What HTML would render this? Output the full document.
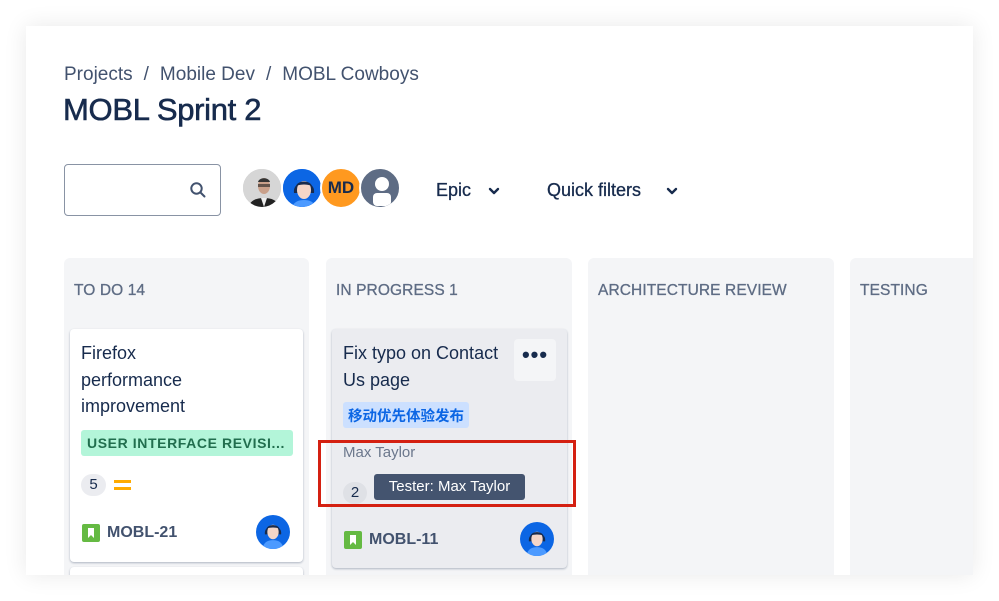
<!DOCTYPE html>
<html><head><meta charset="utf-8"><style>
*{box-sizing:border-box;margin:0;padding:0}
body{width:999px;height:601px;background:#fff;font-family:"Liberation Sans","Noto Sans CJK SC",sans-serif;position:relative;overflow:hidden;color:#172b4d}
.panel{position:absolute;left:26px;top:26px;width:947px;height:549px;background:#fff;box-shadow:0 0 22px rgba(0,0,0,.09);overflow:hidden}
.abs{position:absolute}
.crumb{left:38px;top:38px;font-size:19px;color:#42526e;white-space:nowrap}
.crumb span{margin:0 11px;}
h1{position:absolute;left:37px;top:66px;font-size:31px;font-weight:normal;color:#172b4d;letter-spacing:-.3px;-webkit-text-stroke:.6px #172b4d}
.search{left:38px;top:138px;width:157px;height:52px;border:1.5px solid #8993a4;border-radius:4px}
.av{position:absolute;width:42px;height:42px;border-radius:50%;border:2px solid #fff;overflow:hidden}
.filter{font-size:18px;color:#172b4d;-webkit-text-stroke:.3px #172b4d}
.col{position:absolute;top:232px;height:330px;background:#f4f5f7;border-radius:6px}
.colh{position:absolute;left:10px;top:24px;font-size:15.5px;color:#5e6c84;letter-spacing:.1px;-webkit-text-stroke:.3px #5e6c84}
.card{position:absolute;border-radius:4px;box-shadow:0 1px 2px rgba(9,30,66,.3)}
.t{font-size:18px;line-height:26.5px;color:#172b4d}
.key{font-size:16px;font-weight:bold;color:#42526e}
.bm{position:absolute;width:18px;height:18px;background:#65ba43;border-radius:2px}
</style></head><body>
<div class="panel">
<div class="abs crumb">Projects<span>/</span>Mobile Dev<span>/</span>MOBL Cowboys</div>
<h1>MOBL Sprint 2</h1>
<div class="abs search"><svg style="position:absolute;left:124px;top:16px" width="18" height="18" viewBox="0 0 18 18"><circle cx="7.5" cy="7.5" r="5.2" fill="none" stroke="#42526e" stroke-width="2"/><path d="M11.5 11.5l4 4" stroke="#42526e" stroke-width="2" stroke-linecap="round"/></svg></div>
<div class="av" style="left:215px;top:141px;background:#ccc"><svg width="42" height="42" viewBox="0 0 42 42"><rect width="42" height="42" fill="#d6d6d6"/><path d="M4 42c2-10 8-13 17-13s15 3 17 13z" fill="#222"/><path d="M18 29l3 9 3-9z" fill="#eee"/><ellipse cx="21" cy="17" rx="6" ry="8" fill="#c9a08a"/><path d="M15 13c1-5 11-5 12 0" fill="#333"/><rect x="15" y="15" width="12" height="3" fill="#222" opacity=".6"/></svg></div>
<div class="av" style="left:255px;top:141px;background:#0065ff"><svg width="42" height="42" viewBox="0 0 42 42"><rect width="42" height="42" fill="#0c66e4"/><path d="M8 42c1-8 6-11 13-11s12 3 13 11z" fill="#4c9aff"/><path d="M11 24c-2-14 22-14 20 0z" fill="#172b4d"/><ellipse cx="21" cy="21" rx="7" ry="9" fill="#f4d6c8"/><path d="M13 17c2-6 14-6 16 0c-5-2-11-2-16 0z" fill="#172b4d"/></svg></div>
<div class="av" style="left:294px;top:141px;background:#ff991f;font-size:17px;font-weight:bold;color:#172b4d;text-align:center;line-height:38px">MD</div>
<div class="av" style="left:333px;top:141px;background:#5e6c84"><svg width="42" height="42" viewBox="0 0 42 42"><circle cx="21" cy="15" r="7" fill="#fff"/><rect x="12" y="24" width="18" height="13" rx="4" fill="#fff"/></svg></div>
<div class="abs filter" style="left:410px;top:154px">Epic</div>
<svg class="abs" style="left:462px;top:160px" width="12" height="10" viewBox="0 0 12 10"><path d="M2 3l4 4 4-4" fill="none" stroke="#172b4d" stroke-width="2.4" stroke-linecap="round" stroke-linejoin="round"/></svg>
<div class="abs filter" style="left:521px;top:154px">Quick filters</div>
<svg class="abs" style="left:640px;top:160px" width="12" height="10" viewBox="0 0 12 10"><path d="M2 3l4 4 4-4" fill="none" stroke="#172b4d" stroke-width="2.4" stroke-linecap="round" stroke-linejoin="round"/></svg>

<div class="col" style="left:38px;width:245px"><div class="colh">TO DO 14</div>
<div class="card" style="left:6px;top:71px;width:233px;height:233px;background:#fff">
<div class="t abs" style="left:11px;top:11px">Firefox<br>performance<br>improvement</div>
<div class="abs" style="left:11px;top:101px;width:212px;height:26px;background:#b3f5d9;border-radius:3px;font-size:14px;font-weight:bold;color:#216e4e;padding:5px 6px;letter-spacing:.6px;white-space:nowrap">USER INTERFACE REVISI...</div>
<div class="abs" style="left:11px;top:145px;width:25px;height:22px;background:#ebecf0;border-radius:11px;font-size:15px;text-align:center;line-height:22px">5</div>
<div class="abs" style="left:44px;top:151px;width:17px;height:3px;background:#ffab00"></div>
<div class="abs" style="left:44px;top:158px;width:17px;height:3px;background:#ffab00"></div>
<div class="bm" style="left:12px;top:195px"><svg width="18" height="18"><path d="M6 4h6v10l-3-3-3 3z" fill="#fff"/></svg></div>
<div class="key abs" style="left:37px;top:195px">MOBL-21</div>
<div class="av" style="left:186px;top:186px;width:34px;height:34px;border:none"><svg width="34" height="34" viewBox="0 0 42 42"><rect width="42" height="42" fill="#0c66e4"/><path d="M8 42c1-8 6-11 13-11s12 3 13 11z" fill="#4c9aff"/><path d="M11 24c-2-14 22-14 20 0z" fill="#172b4d"/><ellipse cx="21" cy="21" rx="7" ry="9" fill="#f4d6c8"/><path d="M13 17c2-6 14-6 16 0c-5-2-11-2-16 0z" fill="#172b4d"/></svg></div>
</div>
<div class="card" style="left:6px;top:309px;width:233px;height:40px;background:#fff"></div>
</div>

<div class="col" style="left:300px;width:246px"><div class="colh">IN PROGRESS 1</div>
<div class="card" style="left:6px;top:71px;width:235px;height:239px;background:#ebecf0">
<div class="t abs" style="left:11px;top:11px">Fix typo on Contact<br>Us page</div>
<div class="abs" style="left:182px;top:10px;width:42px;height:42px;background:#f4f5f7;border-radius:4px;font-size:22px;font-weight:bold;text-align:center;line-height:32px;letter-spacing:1px">•••</div>
<div class="abs" style="left:11px;top:73px;width:126px;height:26px;background:#cce0ff;border-radius:3px;font-size:14.5px;font-weight:bold;color:#0c66e4;padding:3px 5px;white-space:nowrap">移动优先体验发布</div>
<div class="abs" style="left:11px;top:115px;font-size:15px;color:#6b778c">Max Taylor</div>
<div class="abs" style="left:11px;top:153px;width:24px;height:22px;background:#dfe1e6;border-radius:11px;font-size:15px;text-align:center;line-height:22px">2</div>
<div class="abs" style="left:42px;top:145px;width:151px;height:26px;background:#44546f;border-radius:3px;color:#fff;font-size:15px;line-height:26px;text-align:center">Tester: Max Taylor</div>
<div class="bm" style="left:12px;top:202px"><svg width="18" height="18"><path d="M6 4h6v10l-3-3-3 3z" fill="#fff"/></svg></div>
<div class="key abs" style="left:37px;top:202px">MOBL-11</div>
<div class="av" style="left:188px;top:193px;width:34px;height:34px;border:none"><svg width="34" height="34" viewBox="0 0 42 42"><rect width="42" height="42" fill="#0c66e4"/><path d="M8 42c1-8 6-11 13-11s12 3 13 11z" fill="#4c9aff"/><path d="M11 24c-2-14 22-14 20 0z" fill="#172b4d"/><ellipse cx="21" cy="21" rx="7" ry="9" fill="#f4d6c8"/><path d="M13 17c2-6 14-6 16 0c-5-2-11-2-16 0z" fill="#172b4d"/></svg></div>
</div>
</div>

<div class="col" style="left:562px;width:246px"><div class="colh">ARCHITECTURE REVIEW</div></div>
<div class="col" style="left:824px;width:246px"><div class="colh">TESTING</div></div>

<div class="abs" style="left:292px;top:414px;width:258px;height:67px;border:3px solid #d42011"></div>
</div>
</body></html>
